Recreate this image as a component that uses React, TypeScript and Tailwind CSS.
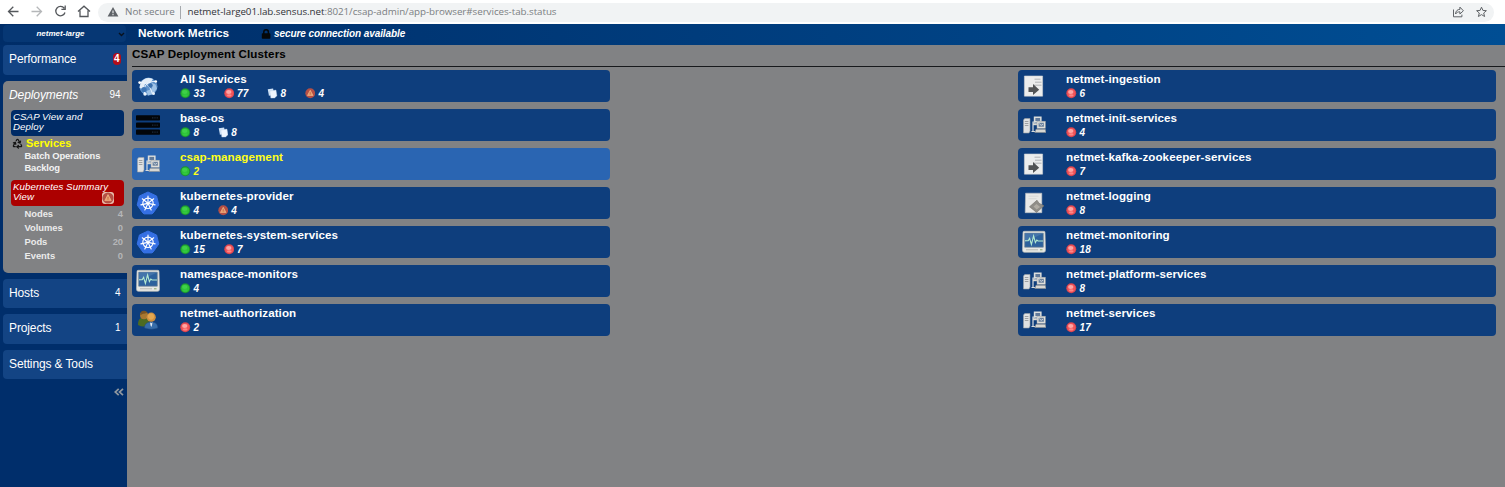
import React from "react";
import { Recycle } from "lucide-react";

type Kind = "green" | "red" | "pages" | "warn";
type IconName = "globe" | "rack" | "hosts" | "helm" | "monitor" | "users" | "ingest" | "log";
type Cluster = { name: string; icon: IconName; counts: [Kind, number][]; selected?: boolean };

const leftClusters: Cluster[] = [
  { name: "All Services", icon: "globe", counts: [["green", 33], ["red", 77], ["pages", 8], ["warn", 4]] },
  { name: "base-os", icon: "rack", counts: [["green", 8], ["pages", 8]] },
  { name: "csap-management", icon: "hosts", counts: [["green", 2]], selected: true },
  { name: "kubernetes-provider", icon: "helm", counts: [["green", 4], ["warn", 4]] },
  { name: "kubernetes-system-services", icon: "helm", counts: [["green", 15], ["red", 7]] },
  { name: "namespace-monitors", icon: "monitor", counts: [["green", 4]] },
  { name: "netmet-authorization", icon: "users", counts: [["red", 2]] },
];

const rightClusters: Cluster[] = [
  { name: "netmet-ingestion", icon: "ingest", counts: [["red", 6]] },
  { name: "netmet-init-services", icon: "hosts", counts: [["red", 4]] },
  { name: "netmet-kafka-zookeeper-services", icon: "ingest", counts: [["red", 7]] },
  { name: "netmet-logging", icon: "log", counts: [["red", 8]] },
  { name: "netmet-monitoring", icon: "monitor", counts: [["red", 18]] },
  { name: "netmet-platform-services", icon: "hosts", counts: [["red", 8]] },
  { name: "netmet-services", icon: "hosts", counts: [["red", 17]] },
];

function Warning({ className }: { className: string }) {
  return (
    <svg viewBox="0 0 12 12" className={className}>
      <circle cx="6" cy="6" r="5.6" fill="#b54f45" />
      <path d="M6 2.6 9.2 8.6H2.8Z" fill="#e9a070" stroke="#f0b184" strokeWidth=".8" strokeLinejoin="round" />
      <path d="M6 4.8v2M6 7.4v.7" stroke="#b4583c" strokeWidth=".8" />
    </svg>
  );
}

function StatusIcon({ kind }: { kind: Kind }) {
  if (kind === "warn") return <Warning className="h-[10.5px] w-[10.5px] shrink-0" />;
  if (kind === "pages")
    return (
      <svg viewBox="0 0 11 11" className="h-[10.5px] w-[10.5px] shrink-0">
        <path d="M.8 1.4 6.4.6l1.2 6.6-5.6.8Z" fill="#cfe2f6" />
        <path d="M3 3.2 9.4 2.2l1 6-2.4 2.2-4 .2Z" fill="#eef5fe" stroke="#b9cfe8" strokeWidth=".4" />
      </svg>
    );
  const green = kind === "green";
  return (
    <svg viewBox="0 0 11 11" className="h-[10.5px] w-[10.5px] shrink-0">
      <circle cx="5.5" cy="5.5" r="5.2" fill={green ? "#1d8f33" : "#d9444e"} />
      <circle cx="5.5" cy="5.5" r="4.1" fill={green ? "#2cc037" : "#f0555a"} />
      <ellipse cx="5" cy="4.2" rx="2.8" ry="2" fill={green ? "#3fd048" : "#ffa5a4"} />
      <ellipse cx="5.5" cy="7.8" rx="2.4" ry="1.2" fill={green ? "#35c93f" : "#ff8585"} />
    </svg>
  );
}

function ClusterIcon({ name }: { name: IconName }) {
  const cls = "h-6 w-6 shrink-0";
  switch (name) {
    case "globe":
      return (
        <svg viewBox="0 0 24 24" className={cls}>
          <circle cx="12.5" cy="12.5" r="9" fill="#5f92cb" />
          <path d="M4.5 9.5C6.5 4.5 12 2.8 17 5l-3 4.5-5 .5-1.5 5-4-1Z" fill="#e4edf7" />
          <path d="m15 8.5 4.5 2 1.5 4-4 5.5-5 1.5-1.5-4.5 5-2 .5-4Z" fill="#9fc2e6" />
          <path d="M3 8.5c5-1 11 2 13.5 11.5M8.5 19.5C7 11 12 7 20 7.5" fill="none" stroke="#eaf4ff" strokeWidth="1" />
          <circle cx="8" cy="15.5" r="2.6" fill="#3c74b5" />
          <circle cx="14.5" cy="11.5" r="2.2" fill="#3b70ae" />
          <circle cx="3.6" cy="8.6" r="1.3" fill="#fff" />
          <circle cx="9" cy="20" r="1.7" fill="#eef5fc" />
          <circle cx="19.8" cy="7.5" r="1.3" fill="#fff" />
          <circle cx="17.5" cy="19.5" r="1.5" fill="#e5effa" />
        </svg>
      );
    case "rack":
      return (
        <svg viewBox="0 0 24 24" className={cls}>
          {[2.2, 9.4, 16.4].map((y) => (
            <g key={y}>
              <rect x="0" y={y} width="24" height="5.4" rx=".8" fill="#020509" />
              <path d={`M16 ${y + 2.7}h1.4m1 0h1.2m1 0h1.2`} stroke="#26374c" strokeWidth="1" />
            </g>
          ))}
        </svg>
      );
    case "hosts":
      return (
        <svg viewBox="0 0 24 24" className={cls}>
          <path d="m1.5 7 1.2-1.5H8V18l-1 2H1.5Z" fill="#dfe1e2" stroke="#9b9fa3" strokeWidth=".6" />
          <path d="M2.8 8.5h3.6m-3.6 2h3.6m-3.6 2h3.6" stroke="#8d9093" strokeWidth=".8" />
          <path d="M9.5 18.5H13M11 18.5V9h2" fill="none" stroke="#d9dddf" strokeWidth="1.2" />
          <rect x="11.8" y="3.5" width="7.8" height="6.2" fill="#dcdedc" />
          <path d="M13.4 4.9h4.7v3.2h-4.7Z" fill="#60799a" />
          <path d="M11 11.2h7" stroke="#dad9d3" strokeWidth="2" />
          <rect x="15" y="8.2" width="8.4" height="7.2" fill="#e0dfda" stroke="#989da2" strokeWidth=".5" />
          <path d="M16.6 9.8h5.3v3.9h-5.3Z" fill="#6b829d" />
          <path d="m17.3 10.6 1.9 1.8 2-1.3" fill="none" stroke="#dfe5ec" strokeWidth=".8" />
          <path d="M14 16.3h9.3l.7 3.2H12.8Z" fill="#d8d7d2" stroke="#868b90" strokeWidth=".6" />
        </svg>
      );
    case "helm":
      return (
        <svg viewBox="0 0 24 24" className={cls}>
          <path d="m12 1 8.6 4 2.2 9-5.8 8.2-1.3.7H8.3L7 22.2 1.2 14l2.2-9Z" fill="#3570e4" stroke="#3570e4" strokeLinejoin="round" />
          <g stroke="#fff" fill="none" strokeWidth="1.15" strokeLinecap="round">
            <circle cx="12" cy="12.3" r="5.2" />
            {[0, 1, 2, 3, 4, 5, 6].map((i) => (
              <path key={i} d="M12 11V5" transform={`rotate(${(i * 360) / 7} 12 12.3)`} />
            ))}
          </g>
          <circle cx="12" cy="12.3" r="1.4" fill="#fff" />
        </svg>
      );
    case "monitor":
      return (
        <svg viewBox="0 0 24 24" className={cls}>
          <path d="M2 1.3h20q1 0 1 1l.5 18q0 2-1.8 2H2.3q-1.8 0-1.8-2L1 2.3q0-1 1-1Z" fill="#e7e8e4" stroke="#b8bab7" strokeWidth=".7" />
          <path d="M2.7 3.2h18.6v14H2.7Z" fill="#2d629d" stroke="#6f8493" strokeWidth=".7" />
          <path d="M3 3.5h18L3 12Z" fill="#4475ab" />
          <path d="M3 10.7h3.2l1.4-2.3 1.8 6 2.2-8.4 1.8 6.6 1.4-2.6 1.2 1H21" fill="none" stroke="#b3ead0" strokeWidth="1.1" />
          <path d="M4 19.8h12" stroke="#b7b9b3" />
          <path d="M18 19.8h2.5" stroke="#86a768" />
        </svg>
      );
    case "users":
      return (
        <svg viewBox="0 0 24 24" className={cls}>
          <path d="M2 17c0-5.5 2-7.5 5.5-7.5s6 2 6 7.5q-6 3-11.5 0Z" fill="#4d6b22" />
          <circle cx="8" cy="7.2" r="4" fill="#a97830" />
          <path d="M4.2 7.5C4 3 7.5 1 11.5 4.4 9.5 6 6.7 4.8 4.2 7.5Z" fill="#7a5424" />
          <path d="M8.5 20c0-4 2.5-6 6.7-6s6.6 2 6.6 6q-6 2.6-13.3 0Z" fill="#376daa" stroke="#204a80" strokeWidth=".5" />
          <path d="m14 14.2 1.2 1 1.3-1-.5 3-.8 1.8-.7-1.8Z" fill="#e8edf2" />
          <circle cx="15.2" cy="9.2" r="4.6" fill="#cf8f3e" />
          <circle cx="15" cy="8.6" r="3.1" fill="#e3a750" />
        </svg>
      );
    case "ingest":
      return (
        <svg viewBox="0 0 24 24" className={cls}>
          <path d="M2.4 2h18.2v20.2H2.4Z" fill="#eceded" stroke="#cfd1d3" strokeWidth=".6" />
          <path d="M12.5 5.2h6m-5.5 3h6.5m-8 3h8" stroke="#a2a5a8" strokeWidth=".8" />
          <path d="M6.5 13.2H11V10l6.2 5.7L11 21v-3H6.5Z" fill="#525456" />
        </svg>
      );
    case "log":
      return (
        <svg viewBox="0 0 24 24" className={cls}>
          <path d="M3.6 2.2h16.2v19.5H3.2Z" fill="#e9e9e7" stroke="#bec1c3" strokeWidth=".6" />
          <path d="M6.5 5.2h10m-10 2.5h8" stroke="#d1d2d0" strokeWidth=".7" />
          <path d="m7.5 15.8 7.5-6.6 2 3 5 2.6-7.5 6.7-3-2.6Z" fill="#8f8d88" stroke="#73706a" strokeWidth=".6" />
          <path d="m11.5 15.5 3-2.5 3.6 3-3.5 2.4Z" fill="#b0aca4" />
        </svg>
      );
  }
}

function ClusterCard({ cluster }: { cluster: Cluster }) {
  const selected = cluster.selected;
  return (
    <div className={`flex h-8 items-center gap-5 rounded-[4px] pl-1 ${selected ? "bg-[#2a65b2] text-[#ffff1a]" : "bg-[#0e3e7d] text-white"}`}>
      <ClusterIcon name={cluster.icon} />
      <div className="flex h-8 flex-col">
        <div className="mb-px mt-px h-4 text-[11.6px] font-bold leading-4 tracking-[0.08px]">{cluster.name}</div>
        <div className="flex h-[11px] gap-[18.7px]">
          {cluster.counts.map(([kind, n]) => (
            <div key={kind} className="flex items-center gap-[3px]">
              <StatusIcon kind={kind} />
              <span className="text-[10px] font-bold italic leading-[11px] tracking-[0.1px]">{n}</span>
            </div>
          ))}
        </div>
      </div>
    </div>
  );
}

function NavItem({ label, count, alert }: { label: string; count?: number; alert?: boolean }) {
  return (
    <div className="flex h-[29.5px] w-[123.5px] shrink-0 items-center justify-between rounded-l-[4px] bg-[#134484] pb-px pl-[6px] pr-[6px] text-[12px] tracking-[-0.12px] text-white">
      <span>{label}</span>
      {count !== undefined && (
        <span className={`text-[10px] leading-3 ${alert ? "rounded-[4px] bg-[#b40d19] px-[1px] font-bold" : ""}`}>{count}</span>
      )}
    </div>
  );
}

function BrowserBar() {
  return (
    <div className="flex h-6 shrink-0 items-center bg-white font-['Open_Sans',sans-serif] text-[9.8px]">
      <svg viewBox="0 0 98 24" className="h-6 w-[98px] shrink-0" fill="none" stroke="#55585c" strokeWidth="1.3">
        <path d="M18.5 11.5H8.5m4.8-4.8-4.8 4.8 4.8 4.8" />
        <path d="M31.5 11.5h10m-4.8-4.8 4.8 4.8-4.8 4.8" stroke="#b5b7b9" />
        <path d="M64.3 8.3A4.7 4.7 0 1 0 65 12.5M65.2 5.5v3.8h-3.8" />
        <path d="M78 11.6 84 6.2l6 5.4M80 10.4v6.1h8v-6.1" />
      </svg>
      <div className="flex h-[19px] w-[1396px] items-center rounded-full bg-[#f1f3f4] pl-[9px] pr-[2px]">
        <svg viewBox="0 0 12 12" className="h-3 w-3 shrink-0">
          <path d="M6 1 11.4 10.5H.6Z" fill="#5f6368" />
          <path d="M6 4.5v2.8M6 8v1.2" stroke="#f1f3f4" strokeWidth="1.1" />
        </svg>
        <span className="ml-[6px] w-[50px] whitespace-nowrap text-[#777b80]">Not secure</span>
        <span className="ml-[5px] h-[13px] w-px bg-[#a6a9ad]" />
        <span className="ml-[6.5px] whitespace-nowrap tracking-[-0.05px] text-[#7b7e82]">
          <span className="text-[#303236]">netmet-large01.lab.sensus.net</span>:8021/csap-admin/app-browser#services-tab.status
        </span>
        <svg viewBox="0 0 42 14" className="ml-auto h-[14px] w-[42px] shrink-0" fill="none" stroke="#606367" strokeWidth="1">
          <path d="M3.5 4.5v7.3h8.4V9.6M5.5 9c.3-3.2 2-4.6 4.4-4.6V2.1l3.5 3.7-3.5 3.2V6.8C8 6.8 6.7 7.4 5.5 9Z" />
          <path d="m31.5 2.2 1.4 3.2 3.5.3-2.7 2.3.9 3.5-3.1-1.9-3.1 1.9.9-3.5-2.7-2.3 3.5-.3Z" />
        </svg>
      </div>
    </div>
  );
}

function Sidebar() {
  return (
    <aside className="flex w-[126.5px] shrink-0 flex-col gap-[6px] bg-[#002e6b] pl-[3px]">
      <NavItem label="Performance" count={4} alert />
      <div className="flex h-[192px] w-[123.5px] shrink-0 flex-col rounded-l-[5px] bg-[#818284] pl-2 text-white">
        <div className="-ml-2 flex h-[29px] shrink-0 items-center justify-between pb-px pl-[6px] pr-[6px]">
          <span className="text-[12px] italic tracking-[-0.08px]">Deployments</span>
          <span className="text-[10px]">94</span>
        </div>
        <div className="h-[26px] w-[113px] shrink-0 rounded-[4px] bg-[#002b66] pl-[2px] pt-[2px] text-[9.7px] italic leading-[10.5px] tracking-[0.08px]">
          CSAP View and<br />Deploy
        </div>
        <div className="mt-[2px] flex h-[12px] shrink-0 items-center gap-[3px] text-[11px] font-bold text-[#ffff00]">
          <Recycle className="ml-[1px] h-[11px] w-[11px] text-[#151515]" strokeWidth={2.8} />
          Services
        </div>
        <div className="pl-[13.5px] text-[9.4px] font-bold leading-[12.6px] tracking-[-0.15px] text-[#f2f2f2]">
          <div>Batch Operations</div>
          <div>Backlog</div>
        </div>
        <div className="mt-[5px] flex h-[26px] w-[113px] shrink-0 rounded-[4px] bg-[#ac0000] pl-[2px] pt-[2px] text-[9.7px] italic leading-[10.5px] tracking-[0.08px]">
          <div className="w-[89px] whitespace-nowrap">Kubernetes Summary<br />View</div>
          <div className="mt-[10px] h-3 w-3 shrink-0 rounded-[3px] bg-[#e9bfae]"><Warning className="h-3 w-3" /></div>
        </div>
        <div className="mt-px w-[112px] pl-[13.5px] text-[9.4px] font-bold leading-[14px] tracking-[-0.03px] text-[#ebebeb]">
          {[["Nodes", 4], ["Volumes", 0], ["Pods", 20], ["Events", 0]].map(([label, n]) => (
            <div key={label} className="flex justify-between"><span>{label}</span><span className="text-[#b5b6b8]">{n}</span></div>
          ))}
        </div>
      </div>
      <NavItem label="Hosts" count={4} />
      <NavItem label="Projects" count={1} />
      <NavItem label="Settings & Tools" />
      <svg viewBox="0 0 10 8" className="ml-[110.5px] mt-[3px] h-2 w-[10px] shrink-0" fill="none" stroke="#8f979f" strokeWidth="1.7">
        <path d="M4.7.8 1.2 4l3.5 3.2M9 .8 5.5 4 9 7.2" />
      </svg>
    </aside>
  );
}

export default function App() {
  return (
    <div className="flex h-[487px] w-[1505px] flex-col overflow-hidden font-['Liberation_Sans',Arial,sans-serif]">
      <BrowserBar />
      <header className="flex h-[21px] shrink-0 items-center bg-linear-to-r from-[#002d68] to-[#004e94] text-white">
        <div className="mb-[2px] ml-[3px] flex h-[17px] w-[123px] items-center rounded-[4px] bg-[#063774] text-[8px] font-bold italic">
          <span className="w-[115px] text-center">netmet-large</span>
          <svg viewBox="0 0 7 5" className="mt-px h-[5px] w-[7px]" fill="none" stroke="#08111e" strokeWidth="1.4"><path d="m1 1 2.5 2.5L6 1" /></svg>
        </div>
        <div className="ml-[12px] w-[122px] pb-[2px] text-[11.8px] font-bold">Network Metrics</div>
        <svg viewBox="0 0 12 12" className="mb-px h-3 w-3 shrink-0">
          <path d="M3.8 6V4a2.3 2.3 0 0 1 4.6 0v2" fill="none" stroke="#050708" strokeWidth="1.5" />
          <rect x="1.8" y="5.2" width="8.6" height="5.6" rx=".8" fill="#050708" />
        </svg>
        <span className="ml-[2px] whitespace-nowrap pb-[2px] text-[10px] font-bold italic tracking-[-0.08px]">secure connection available</span>
      </header>
      <div className="flex min-h-0 flex-1">
        <Sidebar />
        <main className="flex flex-1 flex-col bg-[#818284]">
          <h1 className="ml-[5.5px] h-[22px] border-b border-[#17191c] text-[11.6px] font-bold leading-[17px] tracking-[0.11px] text-black">CSAP Deployment Clusters</h1>
          <div className="ml-[5.5px] mr-[9px] mt-[3px] flex justify-between">
            <div className="flex w-[478px] flex-col gap-[7px]">
              {leftClusters.map((c) => <ClusterCard key={c.name} cluster={c} />)}
            </div>
            <div className="flex w-[478px] flex-col gap-[7px]">
              {rightClusters.map((c) => <ClusterCard key={c.name} cluster={c} />)}
            </div>
          </div>
        </main>
      </div>
    </div>
  );
}
